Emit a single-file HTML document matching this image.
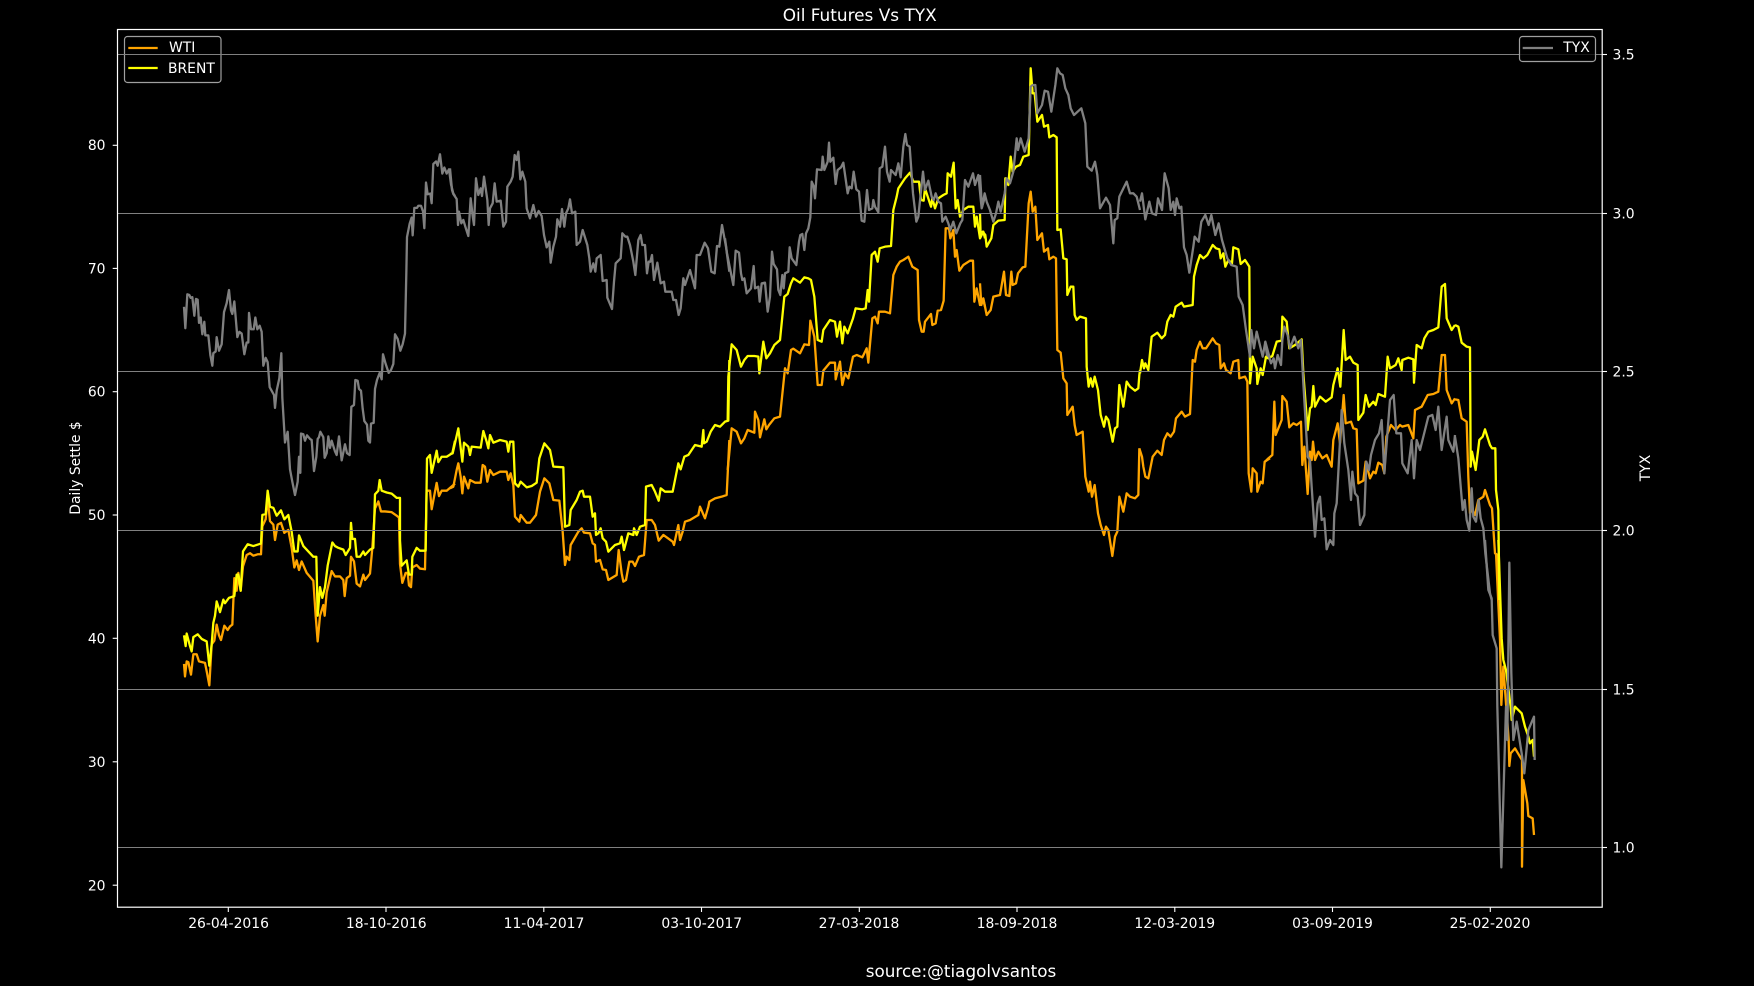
<!DOCTYPE html>
<html>
<head>
<meta charset="utf-8">
<title>Oil Futures Vs TYX</title>
<style>
html,body{margin:0;padding:0;background:#000;width:1754px;height:986px;overflow:hidden}
svg{display:block}
text{font-family:"DejaVu Sans",sans-serif;fill:#fff;font-size:13.9px}
polyline{fill:none;stroke-width:2.3;stroke-linejoin:round;vector-effect:non-scaling-stroke}
.o polyline{stroke:#ffa500}
.y polyline{stroke:#ffff00}
.g polyline{stroke:#808080}
</style>
</head>
<body>
<svg width="1754" height="986" viewBox="0 0 1754 986" xmlns="http://www.w3.org/2000/svg">
<rect width="1754" height="986" fill="#000"/>

<!-- WTI -->
<g class="o">
<polyline transform="translate(175,130) scale(.33333,.35714)" points="27,1495 30,1530 35,1488 40,1490 48,1525 55,1468 65,1468 72,1488 90,1492 96,1520 103,1555 110,1440 118,1430 125,1385 132,1415 138,1428 148,1388 158,1400 165,1390 172,1385 178,1255 185,1290 190,1240 197,1290 204,1222 215,1190 225,1185 235,1192 248,1188 258,1188 262,1110 272,1090 278,1030 285,1095 295,1105 300,1148 308,1105 318,1100 328,1128 340,1120 350,1170 358,1225 365,1205 372,1232 380,1208 395,1240 415,1262 422,1360 428,1432 435,1360 445,1330 449,1360 455,1295 470,1235 480,1250 495,1250 505,1260 509,1305 515,1255 525,1248 528,1195 537,1208 545,1270 555,1278 565,1245 570,1260 585,1242 592,1170 600,1060 610,1040 618,1068 630,1068 650,1070 665,1080 672,1085 675,1215 682,1268 692,1240 698,1240 702,1275 708,1280 712,1225 725,1218 735,1228 750,1230 755,1010 765,1010 770,1062 785,988 792,1025 800,1010 815,1010 840,990"/>
<polyline transform="translate(450,130) scale(.33333)" points="0,1075 10,1070 20,1020 25,1000 32,1040 37,1090 42,1040 55,1075 60,1050 75,1058 92,1058 98,1005 105,1010 112,1055 120,1020 130,1035 150,1025 170,1025 175,1050 182,1030 190,1065 195,1160 208,1175 212,1155 230,1178 240,1178 258,1155 270,1085 283,1045 298,1060 310,1110 328,1112 338,1205 345,1305 350,1280 358,1290 362,1245 385,1205 395,1195 402,1208 420,1210 428,1240 435,1245 438,1295 450,1290 458,1318 468,1320 475,1350 500,1335 506,1260 515,1330 520,1355 528,1350 538,1295 548,1295 555,1308 567,1280 582,1275 590,1170 605,1170 615,1185 626,1232 640,1215 668,1235 672,1245 685,1185 690,1230 698,1205 705,1175 720,1170 745,1155 750,1130 765,1165 775,1130 778,1115 795,1105 815,1100 830,1095 838,930"/>
<polyline transform="translate(725,110) scale(.33333)" points="8,1080 20,955 35,965 48,1000 58,985 68,960 88,968 90,905 100,930 105,982 118,928 124,958 132,945 148,925 165,920 180,775 188,790 198,720 205,716 225,730 238,703 252,705 256,632 268,680 278,825 290,825 295,782 315,758 330,758 332,808 345,755 352,825 360,790 370,805 384,740 395,735 412,742 425,715 430,758 442,625 450,620 458,640 462,605 480,605 495,610 505,495 515,470 525,455 535,450 550,440 562,470 578,480 582,630 590,665 596,665 600,635 618,612 622,645 632,640 638,602 648,600 656,572 662,355 672,355 676,385 685,360 690,440 695,420 703,482 715,465 735,452 744,452 748,575 755,535 765,585 775,570 780,590"/>
<polyline transform="translate(980,50) scale(.33333)" points="0,700 4,765 10,745 14,765 20,795 32,780 40,740 60,735 72,665 78,735 88,738 94,665 98,705 108,700 114,670 128,652 136,650 146,460 152,425 158,485 166,470 172,570 186,550 192,605 204,595 208,628 220,620 228,625 232,900 242,908 250,985 260,1000 262,1095 278,1070 284,1125 290,1155 308,1145 316,1280 326,1325 330,1295 336,1340 344,1305 354,1390 362,1425 372,1455 378,1430 385,1440 397,1518 405,1460 412,1445 418,1340 430,1385 440,1330 450,1340 465,1345 475,1335 478,1195"/>
<polyline transform="translate(1130,160) scale(.33333)" points="28,865 36,890 40,920 46,950 55,955 68,890 82,872 95,885 102,840 112,820 122,830 132,815 138,775 155,755 165,770 180,762 188,600 195,605 200,570 210,545 218,565 228,565 248,535 258,550 268,555 272,625 282,610 288,630 302,640 310,605 325,600 328,655 345,650 352,665 356,940 364,995 368,925 380,940 382,995 392,965 398,970 404,905 420,895"/>
<polyline transform="translate(1265,270) scale(.33333)" points="0,575 10,565 22,555 28,395 32,495 50,450 52,378 65,395 73,472 85,460 95,465 108,455 112,585 118,530 128,672 135,545 140,570 144,515 150,570 160,545 172,565 185,555 200,590 205,510 218,460 225,520 236,375 242,460 258,455 265,475 275,478 280,640 295,632 302,575 315,625 325,605 332,610 340,578 352,585 358,610 364,500 378,465 392,480 405,465 412,470 430,465 445,505 450,420 470,410 488,375 505,372 520,365 530,255 540,255 545,360 560,400 570,385"/>
<polyline transform="translate(1440,270) scale(.33333)" points="45,388 55,390 65,445 80,455 85,620 90,730 96,720 105,735 115,690 130,680 135,660 150,705 156,715 165,850 172,855 178,990"/>
<polyline transform="translate(1470,540) scale(.33333)" points="78,40 90,300 94,495 100,380 116,600 118,678 122,640 135,625 150,650 156,660 156,980 160,720 172,790 175,828 188,835 192,885"/>
</g>

<!-- BRENT -->
<g class="y">
<polyline transform="translate(175,130) scale(.33333,.35714)" points="27,1415 32,1445 35,1410 45,1445 50,1460 55,1420 68,1412 80,1425 95,1432 103,1500 110,1440 115,1380 120,1360 125,1320 135,1350 145,1315 150,1325 162,1310 178,1305 185,1245 190,1245 197,1290 204,1180 218,1160 235,1165 258,1158 262,1078 272,1075 278,1010 285,1055 295,1058 305,1080 318,1065 328,1090 340,1078 350,1125 358,1180 368,1180 372,1135 385,1165 400,1180 415,1195 424,1195 428,1360 435,1280 442,1310 450,1280 458,1220 472,1155 480,1165 490,1170 505,1175 512,1190 525,1170 528,1100 532,1145 540,1145 545,1195 555,1195 565,1180 570,1190 585,1175 595,1170 600,1020 610,1010 614,980 620,1010 635,1015 650,1018 665,1030 675,1030 675,1150 680,1220 695,1205 702,1245 710,1245 712,1195 725,1170 735,1178 752,1178 756,920 765,910 770,960 785,898 790,930 800,915 815,915 832,905 840,870"/>
<polyline transform="translate(450,130) scale(.33333)" points="0,972 8,970 25,895 37,995 42,938 55,950 60,975 65,950 92,953 100,903 110,935 115,955 120,915 130,938 150,930 170,935 175,965 180,935 190,935 195,1060 205,1070 212,1055 230,1072 245,1068 260,1058 268,985 283,940 300,960 310,1010 340,1012 345,1190 358,1185 362,1140 380,1110 390,1085 398,1082 402,1100 420,1100 428,1160 435,1150 438,1215 445,1210 452,1195 458,1225 468,1235 475,1265 495,1245 510,1240 515,1220 522,1260 535,1210 550,1215 552,1195 560,1215 570,1190 585,1185 588,1070 605,1065 615,1085 626,1112 632,1075 645,1085 668,1085 685,1000 692,1018 703,980 715,975 735,945 755,950 760,900 762,940 770,935 782,905 795,885 810,890 825,875 835,872 838,690"/>
<polyline transform="translate(725,110) scale(.33333)" points="8,930 10,800 20,703 35,720 48,770 58,750 68,738 88,738 100,740 103,790 115,695 124,745 135,730 148,705 165,690 178,560 188,552 198,520 205,505 225,518 238,502 250,505 258,510 268,560 278,690 290,695 295,660 315,630 330,635 336,680 345,635 352,700 358,650 368,670 384,625 392,595 412,598 422,595 428,540 432,575 440,435 450,425 458,455 464,415 480,410 498,408 505,300 515,260 520,235 540,205 555,188 565,215 582,215 588,270 596,272 600,235 618,290 622,265 630,295 640,265 655,255 665,250 668,190 678,200 686,158 692,295 698,270 705,320 715,300 730,290 745,290 750,350 755,320 765,385 775,365 780,385"/>
<polyline transform="translate(980,50) scale(.33333)" points="0,490 2,560 8,545 16,555 20,590 34,565 40,525 55,512 74,510 76,385 85,405 92,320 98,365 108,350 120,345 130,320 146,315 152,55 158,130 164,130 172,215 186,195 192,230 204,225 208,262 220,255 230,262 232,540 242,538 250,625 260,628 262,735 272,710 280,710 284,795 290,810 300,800 318,805 320,950 326,1010 332,985 338,1010 344,980 354,1020 362,1095 372,1130 378,1100 385,1110 398,1175 405,1135 412,1130 418,1005 430,1070 440,995 450,1010 465,1022 475,1015 478,975 480,960"/>
<polyline transform="translate(1130,160) scale(.33333)" points="30,640 36,600 42,625 46,610 55,630 65,530 82,518 95,535 105,525 112,485 122,465 130,470 137,440 155,428 162,440 188,435 192,350 200,315 210,285 220,295 232,285 248,255 258,265 268,268 272,295 280,280 286,320 295,300 306,310 310,262 325,268 332,312 345,300 358,320 360,670 368,590 380,625 382,672 392,625 398,645 408,590 420,585"/>
<polyline transform="translate(1265,270) scale(.33333)" points="0,260 10,265 22,258 32,225 35,215 50,212 52,140 65,155 73,235 90,225 110,208 115,310 128,480 135,415 140,410 145,348 150,410 165,380 182,395 200,382 205,345 218,295 226,350 236,180 242,270 255,260 265,278 278,285 280,450 295,428 302,375 312,410 325,395 332,405 340,372 360,380 368,260 375,295 392,285 400,265 410,300 412,270 430,263 445,268 447,338 455,225 470,235 478,205 490,185 505,180 520,172 530,50 540,42 545,145 560,180 570,165"/>
<polyline transform="translate(1440,270) scale(.33333)" points="45,165 55,170 65,218 80,230 90,232 92,590 96,545 107,600 118,510 128,500 135,478 150,525 156,535 166,535 168,660 175,720 178,990"/>
<polyline transform="translate(1470,540) scale(.33333)" points="85,0 95,295 100,360 108,390 122,500 125,540 135,500 155,520 165,560 175,590 180,610 188,600 192,650"/>
</g>

<!-- Left legend -->
<rect x="124.5" y="36.5" width="96.5" height="46" rx="3" ry="3" fill="#000" fill-opacity=".8" stroke="#a0a0a0" stroke-width="1.2"/>
<line x1="128.3" y1="48" x2="157.7" y2="48" stroke="#ffa500" stroke-width="2.2"/>
<line x1="128.3" y1="68" x2="157.7" y2="68" stroke="#ffff00" stroke-width="2.2"/>
<text x="169" y="52">WTI</text>
<text x="168" y="73">BRENT</text>

<!-- Grid -->
<g stroke="#808080" stroke-width="1">
<line x1="117.5" x2="1602" y1="54.5" y2="54.5"/>
<line x1="117.5" x2="1602" y1="213.5" y2="213.5"/>
<line x1="117.5" x2="1602" y1="371.5" y2="371.5"/>
<line x1="117.5" x2="1602" y1="530.5" y2="530.5"/>
<line x1="117.5" x2="1602" y1="689.5" y2="689.5"/>
<line x1="117.5" x2="1602" y1="847.5" y2="847.5"/>
</g>

<!-- TYX -->
<g class="g">
<polyline transform="translate(175,130) scale(.33333,.35714)" points="27,495 31,555 37,460 43,462 47,470 52,468 58,520 63,473 68,475 72,540 77,525 82,572 88,537 91,575 100,575 106,630 112,660 115,625 122,620 125,580 132,618 140,600 147,510 155,485 162,448 168,505 172,515 178,480 187,580 193,565 200,570 208,628 215,595 220,595 222,512 228,558 236,558 241,525 247,558 254,548 260,565 265,660 272,638 278,650 284,720 297,742 300,778 305,730 313,695 319,625 322,750 330,875 338,845 345,950 352,985 360,1022 368,985 372,915 376,960 378,850 385,852 390,870 396,855 405,865 410,868 417,955 424,915 428,865 432,860 436,845 445,860 449,918 455,905 460,858 465,890 470,870 480,900 485,910 492,858 500,925 510,880 516,905 524,910 529,775 537,770 541,700 548,702 552,725 558,730 563,780 568,815 576,825 580,870 585,875 588,822 596,820 600,725 606,700 614,680 620,698 624,628 632,655 641,680 648,672 655,655 660,572 668,585 676,618 683,600 690,570 694,400 696,300 704,262 710,245 713,295 718,218 726,218 730,212 738,212 744,228 748,275 753,147 758,180 766,178 770,205 775,95 783,88 788,100 795,68 802,122 808,105 815,122 822,110 828,152 835,178 840,185"/>
<polyline transform="translate(450,130) scale(.33333)" points="0,115 6,180 10,192 20,207 24,285 27,245 34,280 40,270 46,290 55,318 62,205 68,258 72,285 78,145 85,195 92,175 96,198 102,140 112,210 116,285 120,235 128,220 134,160 140,215 152,212 160,290 168,275 172,170 182,155 188,140 194,75 200,90 205,65 211,148 217,125 226,155 230,235 240,265 250,225 258,260 266,243 275,258 282,315 290,352 298,335 302,398 310,350 318,320 322,268 330,290 336,237 343,290 348,250 355,235 360,208 366,250 376,245 380,345 390,335 398,300 412,345 418,385 422,425 430,400 436,425 440,385 452,375 458,453 470,450 472,503 486,537 492,455 497,400 512,385 517,310 526,320 532,320 540,345 550,395 556,435 565,330 572,315 577,345 585,345 591,430 596,395 601,395 606,375 612,450 622,398 632,460 642,455 646,485 665,485 670,510 678,510 686,555 692,535 700,445 705,465 720,420 735,475 740,375 750,375 764,338 774,355 784,425 794,430 801,348 808,350 816,285 828,350 838,425"/>
<polyline transform="translate(725,110) scale(.33333)" points="0,385 6,430 14,470 25,525 32,422 42,428 48,490 52,510 58,505 65,550 78,535 86,468 90,535 100,530 104,575 110,520 120,518 128,605 135,560 141,425 146,462 156,478 160,540 166,555 172,495 176,535 180,490 190,485 194,412 200,445 214,465 222,395 226,375 232,372 238,420 243,370 250,355 256,322 260,215 266,228 270,265 276,178 290,180 293,140 298,180 308,155 312,98 316,155 325,143 332,222 338,180 348,172 355,158 368,250 373,230 380,235 386,185 394,238 402,245 410,332 418,335 426,240 432,300 442,295 445,270 450,290 460,307 464,175 472,170 480,110 486,185 494,215 498,180 512,195 520,160 527,202 535,110 541,72 546,105 554,110 564,250 574,335 580,320 594,185 600,240 610,212 620,260 626,270 632,250 640,275 648,280 652,335 662,320 670,340 676,360 685,335 694,370 706,340 712,330 720,210 730,230 744,190 750,225 760,195 770,295 780,260"/>
<polyline transform="translate(980,50) scale(.33333)" points="0,375 6,472 14,430 20,455 30,480 40,515 48,490 55,455 62,485 74,430 80,385 90,400 100,365 110,265 114,300 122,265 134,305 146,265 152,110 158,105 166,105 172,190 186,165 194,122 204,125 214,185 226,105 232,55 240,70 248,75 256,115 265,135 272,175 282,195 304,175 316,220 322,350 335,362 345,335 352,375 360,475 378,443 390,465 400,580 404,510 412,505 418,440 440,395 450,430 460,430 470,440 480,480"/>
<polyline transform="translate(1130,160) scale(.33333)" points="30,125 36,100 46,178 58,125 66,160 78,165 84,115 96,150 104,40 116,85 122,150 130,125 135,165 140,115 148,145 154,140 162,262 170,285 178,338 190,260 194,230 206,245 214,185 226,165 236,195 244,165 256,225 266,190 276,240 292,295 304,315 320,320 326,410 338,435 348,510 360,590 364,510 372,565 380,515 398,590 406,545 418,590"/>
<polyline transform="translate(1265,270) scale(.33333)" points="0,215 6,255 12,260 18,280 26,265 30,295 38,255 48,285 52,210 58,170 68,195 75,235 88,200 100,235 108,210 115,340 128,560 135,570 140,650 150,800 158,700 165,680 170,750 178,745 185,838 195,810 205,825 208,730 215,700 230,420 238,520 250,600 258,690 262,605 270,670 278,680 285,765 298,735 304,575 312,600 318,555 330,510 342,490 350,450 358,610 368,480 375,390 386,375 394,490 408,490 412,580 428,610 440,510 447,625 455,510 465,540 480,480 490,440 502,435 512,480 520,410 530,540 545,440 550,510 565,545 570,495"/>
<polyline transform="translate(1440,270) scale(.33333)" points="45,500 55,565 68,720 74,690 80,750 88,782 95,655 100,740 108,755 116,690 122,745 130,775 136,850 150,970 155,990"/>
<polyline transform="translate(1470,540) scale(.33333)" points="45,0 55,150 65,175 68,285 80,325 82,500 94,982 108,500 112,600 118,68 124,400 130,600 140,545 155,640 163,700 175,570 192,530 194,660"/>
</g>

<!-- Right legend -->
<rect x="1519.5" y="36.5" width="76" height="25" rx="3" ry="3" fill="#000" fill-opacity=".8" stroke="#a0a0a0" stroke-width="1.2"/>
<line x1="1522.7" y1="48" x2="1553" y2="48" stroke="#808080" stroke-width="2.2"/>
<text x="1563.3" y="52">TYX</text>

<!-- Spines -->
<rect x="117.5" y="29.5" width="1484.7" height="877.7" fill="none" stroke="#fff" stroke-width="1.2"/>

<!-- Ticks -->
<g stroke="#fff" stroke-width="1.1">
<line x1="112.7" x2="117.5" y1="145.3" y2="145.3"/>
<line x1="112.7" x2="117.5" y1="268.4" y2="268.4"/>
<line x1="112.7" x2="117.5" y1="391.7" y2="391.7"/>
<line x1="112.7" x2="117.5" y1="515" y2="515"/>
<line x1="112.7" x2="117.5" y1="638.3" y2="638.3"/>
<line x1="112.7" x2="117.5" y1="761.8" y2="761.8"/>
<line x1="112.7" x2="117.5" y1="885.2" y2="885.2"/>
<line x1="1602" x2="1607" y1="54.5" y2="54.5"/>
<line x1="1602" x2="1607" y1="213.5" y2="213.5"/>
<line x1="1602" x2="1607" y1="371.5" y2="371.5"/>
<line x1="1602" x2="1607" y1="530.5" y2="530.5"/>
<line x1="1602" x2="1607" y1="689.5" y2="689.5"/>
<line x1="1602" x2="1607" y1="847.5" y2="847.5"/>
<line x1="228.3" x2="228.3" y1="907" y2="912"/>
<line x1="386" x2="386" y1="907" y2="912"/>
<line x1="543.8" x2="543.8" y1="907" y2="912"/>
<line x1="701.5" x2="701.5" y1="907" y2="912"/>
<line x1="859.3" x2="859.3" y1="907" y2="912"/>
<line x1="1017" x2="1017" y1="907" y2="912"/>
<line x1="1174.8" x2="1174.8" y1="907" y2="912"/>
<line x1="1332.5" x2="1332.5" y1="907" y2="912"/>
<line x1="1490.3" x2="1490.3" y1="907" y2="912"/>
</g>

<!-- Left tick labels -->
<g text-anchor="end">
<text x="105.5" y="150">80</text>
<text x="105.5" y="273.4">70</text>
<text x="105.5" y="396.7">60</text>
<text x="105.5" y="520">50</text>
<text x="105.5" y="643.3">40</text>
<text x="105.5" y="767">30</text>
<text x="105.5" y="890.5">20</text>
</g>

<!-- Right tick labels -->
<g>
<text x="1612.5" y="59.5">3.5</text>
<text x="1612.5" y="218.5">3.0</text>
<text x="1612.5" y="376.5">2.5</text>
<text x="1612.5" y="535.5">2.0</text>
<text x="1612.5" y="694.5">1.5</text>
<text x="1612.5" y="852.5">1.0</text>
</g>

<!-- Bottom tick labels -->
<g text-anchor="middle">
<text x="228.6" y="928">26-04-2016</text>
<text x="386.3" y="928">18-10-2016</text>
<text x="544" y="928">11-04-2017</text>
<text x="701.8" y="928">03-10-2017</text>
<text x="859" y="928">27-03-2018</text>
<text x="1017" y="928">18-09-2018</text>
<text x="1174.8" y="928">12-03-2019</text>
<text x="1332.5" y="928">03-09-2019</text>
<text x="1490" y="928">25-02-2020</text>
</g>

<!-- Titles -->
<text x="859.7" y="21" text-anchor="middle" style="font-size:16.9px">Oil Futures Vs TYX</text>
<text x="961" y="977" text-anchor="middle" style="font-size:16.8px">source:@tiagolvsantos</text>
<text transform="translate(80,468) rotate(-90)" text-anchor="middle">Daily Settle $</text>
<text transform="translate(1650,468) rotate(-90)" text-anchor="middle">TYX</text>
</svg>
</body>
</html>
